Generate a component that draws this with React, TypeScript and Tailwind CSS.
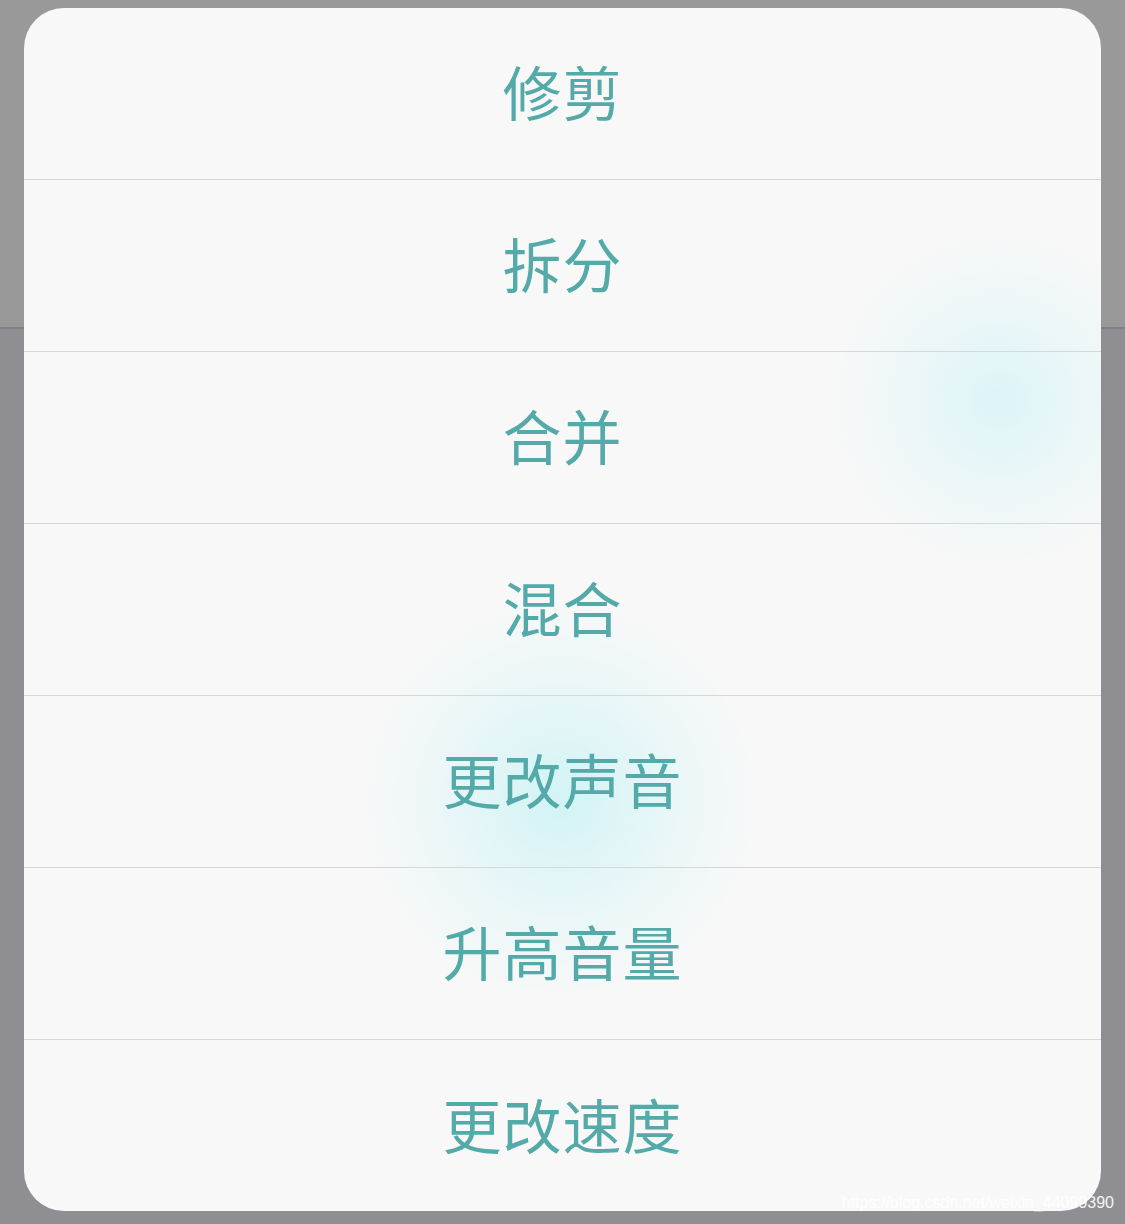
const items = ['修剪', '拆分', '合并', '混合', '更改声音', '升高音量', '更改速度']

export default function App() {
  return (
    <main className="relative w-full h-[1224px] overflow-hidden flex flex-col bg-[#8f8e93]">
      {/* backdrop */}
      <div className="h-[329px] bg-[#999999] border-b-2 border-[#808080]" />
      <div className="flex-1 bg-[#8f8e93]" />

      {/* action sheet */}
      <div className="absolute left-[24px] top-[8px] w-[1077px] h-[1203px] rounded-[40px] overflow-hidden bg-[#f8f8f8] bg-[radial-gradient(circle_at_536px_792px,#d2f3f5_0px,rgba(220,245,247,0.6)_100px,rgba(248,248,248,0)_200px),radial-gradient(circle_at_975px_392px,#dcf4f7_0px,rgba(225,245,248,0.6)_80px,rgba(248,248,248,0)_170px)]">
        <div className="flex flex-col">
          {items.map((label, i) => (
            <div
              key={label}
              className={`h-[172px] pb-[6px] flex items-center justify-center ${i < items.length - 1 ? 'border-b border-[#d8d8d8]' : ''}`}
            >
              <span className="text-[59px] leading-none text-[#54aaa9] font-['Noto_Sans_CJK_SC','Noto_Sans',sans-serif] tracking-[1px]">
                {label}
              </span>
            </div>
          ))}
        </div>
      </div>

      {/* watermark */}
      <div className="absolute right-[11px] bottom-[9px] text-[16px] text-white/90 font-['Liberation_Sans',sans-serif]">
        https://blog.csdn.net/weixin_44099390
      </div>
    </main>
  )
}
